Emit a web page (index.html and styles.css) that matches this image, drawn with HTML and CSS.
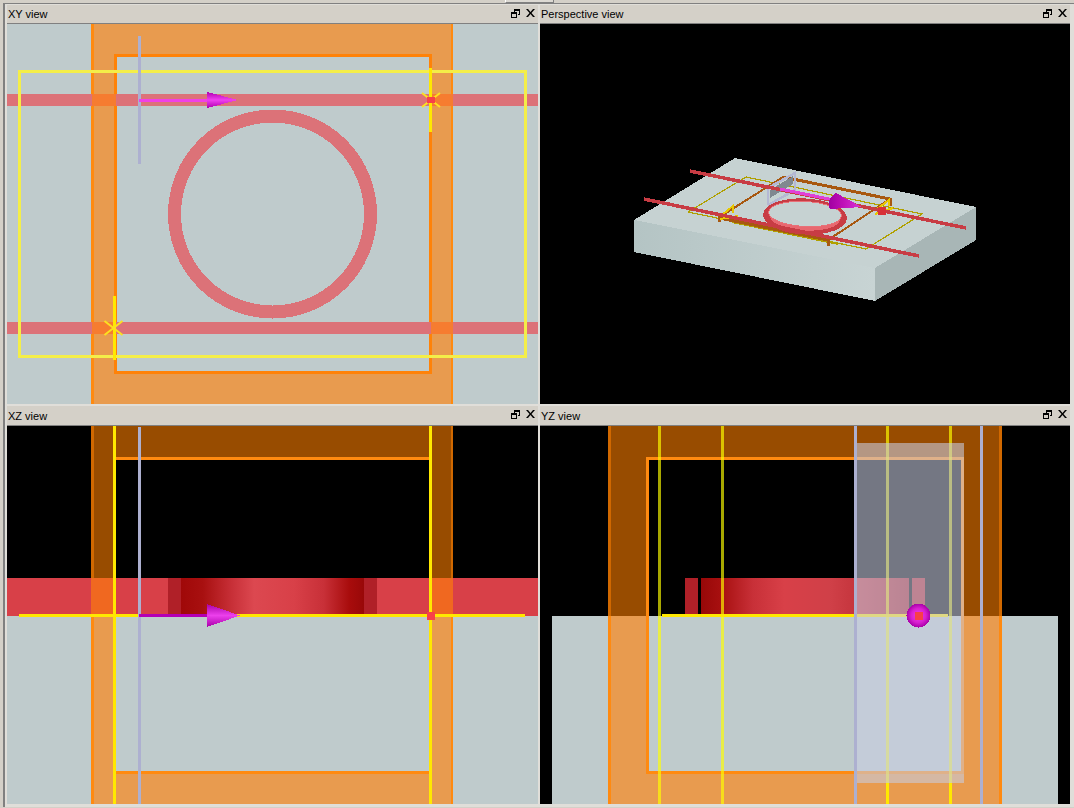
FILE: index.html
```html
<!DOCTYPE html>
<html lang="en">
<head>
<meta charset="utf-8">
<title>Views</title>
<link rel="stylesheet" href="styles.css">
</head>
<body>
<div class="topbar"><div class="toptab"></div></div>
<main class="shell">

<section class="panel">
  <header class="titlebar"><span class="title">XY view</span>
    <span class="controls">
      <svg class="icon" viewBox="0 0 9 9"><path class="glyph" d="M3 0h6v6H7V5h1V2H4v1H3zM0 3h6v6H0zM1 5v3h4V5z"/></svg>
      <svg class="icon" viewBox="0 0 9 9"><path class="glyph" d="M0 0h2l2.500 3 2.500-3h2L5.500 4 9 8H7L4.500 5 2 8H0l3.500-4z"/></svg>
    </span></header>
  <svg class="view" viewBox="7 24 531 380">
    <defs>
      <linearGradient id="arrowA" x1="0" y1="0" x2="0" y2="1"><stop offset="0" stop-color="#b000b0"/><stop offset=".5" stop-color="#f040f0"/><stop offset="1" stop-color="#b000b0"/></linearGradient>
    </defs>
    <rect class="slab" x="7" y="24" width="531" height="380"/>
    <rect class="orange" x="91" y="24" width="362" height="380"/>
    <rect class="edge" x="91" y="24" width="3" height="380"/>
    <rect class="edge" x="451" y="24" width="2" height="380"/>
    <rect class="slab frame" x="115" y="55.500" width="315.500" height="316.500"/>
    <rect class="band" x="7" y="94" width="531" height="12"/>
    <rect class="band" x="7" y="322" width="531" height="12"/>
    <rect class="overlap" x="92" y="94" width="24" height="12"/>
    <rect class="overlap" x="431" y="94" width="22" height="12"/>
    <rect class="overlap" x="92" y="322" width="24" height="12"/>
    <rect class="overlap" x="431" y="322" width="22" height="12"/>
    <circle class="ring" cx="272.500" cy="214" r="98"/>
    <rect class="outline" x="19.500" y="71.500" width="506" height="285"/>
    <rect class="lav" x="138" y="36" width="3" height="128"/>
    <rect class="mag-light" x="139" y="99" width="69" height="2.500"/>
    <path d="M207 92L238 100L207 108z" fill="url(#arrowA)"/>
    <rect class="yel" x="429" y="68" width="3" height="64"/>
    <rect class="yel" x="113" y="296" width="3" height="64"/>
    <path class="cross" d="M422 93l18 14M440 93l-18 14"/>
    <rect class="dot" x="427" y="96.500" width="8" height="6"/>
    <path class="cross" d="M104.500 321l18 14M122.500 321l-18 14"/>
  </svg>
</section>

<section class="panel">
  <header class="titlebar"><span class="title">Perspective view</span>
    <span class="controls">
      <svg class="icon" viewBox="0 0 9 9"><path class="glyph" d="M3 0h6v6H7V5h1V2H4v1H3zM0 3h6v6H0zM1 5v3h4V5z"/></svg>
      <svg class="icon" viewBox="0 0 9 9"><path class="glyph" d="M0 0h2l2.500 3 2.500-3h2L5.500 4 9 8H7L4.500 5 2 8H0l3.500-4z"/></svg>
    </span></header>
  <svg class="view" viewBox="540 24 530 380">
    <defs>
      <linearGradient id="front" x1="634" y1="0" x2="875" y2="0" gradientUnits="userSpaceOnUse"><stop offset="0" stop-color="#b4c4c4"/><stop offset="1" stop-color="#c8d4d4"/></linearGradient>
      <linearGradient id="cone" x1="0" y1="0" x2="1" y2="0"><stop offset="0" stop-color="#a000a0"/><stop offset=".45" stop-color="#c010b8"/><stop offset="1" stop-color="#d838d8"/></linearGradient>
    </defs>
    <rect class="void" x="540" y="24" width="530" height="380"/>
    <polygon class="top" points="634,220 735,158 976,207 875,268"/>
    <polygon points="634,220 875,268 875,301 634,252" fill="url(#front)"/>
    <polygon class="side" points="875,268 976,207 976,240 875,301"/>
    <polygon class="wire" points="746,177 922,214 866,249 688,212"/>
    <path class="wire wire-b" d="M732 222L838 244"/>
    <path class="brown back" d="M783 177L890 199"/>
    <path class="brown" d="M783 177L718 218M890 199L828 240"/>
    <path class="brown thick" d="M719 218L828 240"/>
    <path class="brown back" d="M719 216v6M828 238v8M890 198v8"/>
    <polygon class="pane" points="770,190 793,176 793,184 770,198"/>
    <path class="lavline" d="M768,205V188L795,173V190L768,205"/>
    <path class="yellow3" d="M722 215L733 206V213M720 219L738 216M877 209L889 200V206M875 214L893 208"/>
    <ellipse class="ring3d" cx="805" cy="216.500" rx="42" ry="18" transform="rotate(3 805 216.500)"/>
    <ellipse class="ring3d-l" cx="805" cy="218" rx="35" ry="12.500" transform="rotate(3 805 218)"/>
    <ellipse class="ring3d-i" cx="805" cy="214" rx="36.500" ry="12.500" transform="rotate(3 805 214)"/>
    <path class="red3d" d="M690 171L966 228"/>
    <path class="red3d" d="M644 199L919 256"/>
    <path class="mag3d" d="M780 189L834 200"/>
    <path d="M836 193L862 207L830 209Q825 200 836 193z" fill="url(#cone)"/>
    <rect class="dot3d" x="878" y="207" width="8" height="8"/>
  </svg>
</section>

<section class="panel panel-low">
  <header class="titlebar"><span class="title">XZ view</span>
    <span class="controls">
      <svg class="icon" viewBox="0 0 9 9"><path class="glyph" d="M3 0h6v6H7V5h1V2H4v1H3zM0 3h6v6H0zM1 5v3h4V5z"/></svg>
      <svg class="icon" viewBox="0 0 9 9"><path class="glyph" d="M0 0h2l2.500 3 2.500-3h2L5.500 4 9 8H7L4.500 5 2 8H0l3.500-4z"/></svg>
    </span></header>
  <svg class="view" viewBox="7 426 531 378">
    <defs>
      <linearGradient id="ringXZ" x1="181" y1="0" x2="364" y2="0" gradientUnits="userSpaceOnUse">
        <stop offset="0" stop-color="#a00808"/><stop offset=".12" stop-color="#a81010"/><stop offset=".28" stop-color="#c83038"/><stop offset=".4" stop-color="#dc4850"/><stop offset=".62" stop-color="#d84048"/><stop offset=".78" stop-color="#c83038"/><stop offset=".92" stop-color="#a80c0c"/><stop offset="1" stop-color="#980808"/>
      </linearGradient>
      <linearGradient id="arrowB" x1="0" y1="0" x2="0" y2="1"><stop offset="0" stop-color="#a800a8"/><stop offset=".5" stop-color="#ec40ec"/><stop offset="1" stop-color="#a800a8"/></linearGradient>
    </defs>
    <rect class="void" x="7" y="426" width="531" height="378"/>
    <rect class="slab" x="7" y="616" width="531" height="188"/>
    <rect class="brownfill" x="91" y="426" width="362" height="190"/>
    <rect class="orange" x="91" y="616" width="362" height="188"/>
    <rect class="void" x="115" y="458" width="316" height="158"/>
    <rect class="slab" x="115" y="616" width="316" height="157"/>
    <rect class="edge-dark" x="91" y="426" width="3" height="190"/>
    <rect class="edge-dark" x="451" y="426" width="2" height="190"/>
    <rect class="edge" x="91" y="616" width="3" height="188"/>
    <rect class="edge" x="451" y="616" width="2" height="188"/>
    <rect class="edge" x="115" y="457" width="316" height="3"/>
    <rect class="edge" x="115" y="771" width="316" height="3"/>
    <rect class="redband" x="7" y="578" width="531" height="38"/>
    <rect class="overlap2" x="91" y="578" width="24" height="38"/>
    <rect class="overlap2" x="431" y="578" width="22" height="38"/>
    <rect class="ringside" x="168" y="578" width="13" height="38"/>
    <rect class="ringside" x="364" y="578" width="13" height="38"/>
    <rect x="181" y="578" width="183" height="38" fill="url(#ringXZ)"/>
    <rect class="yel" x="19" y="614" width="506" height="3"/>
    <rect class="yel" x="113" y="426" width="3" height="378"/>
    <rect class="yel" x="429" y="426" width="3" height="378"/>
    <rect class="lav" x="138" y="427" width="3" height="377"/>
    <rect class="mag-dark" x="139" y="614" width="69" height="3"/>
    <path d="M207 604L240 615.500L207 627z" fill="url(#arrowB)"/>
    <rect class="dot" x="427" y="612" width="8" height="8"/>
  </svg>
</section>

<section class="panel panel-low">
  <header class="titlebar"><span class="title">YZ view</span>
    <span class="controls">
      <svg class="icon" viewBox="0 0 9 9"><path class="glyph" d="M3 0h6v6H7V5h1V2H4v1H3zM0 3h6v6H0zM1 5v3h4V5z"/></svg>
      <svg class="icon" viewBox="0 0 9 9"><path class="glyph" d="M0 0h2l2.500 3 2.500-3h2L5.500 4 9 8H7L4.500 5 2 8H0l3.500-4z"/></svg>
    </span></header>
  <svg class="view" viewBox="540 426 530 378">
    <defs>
      <linearGradient id="ringYZ" x1="701" y1="0" x2="909" y2="0" gradientUnits="userSpaceOnUse">
        <stop offset="0" stop-color="#980808"/><stop offset=".1" stop-color="#a81010"/><stop offset=".25" stop-color="#c83038"/><stop offset=".4" stop-color="#d84048"/><stop offset=".62" stop-color="#d04048"/><stop offset=".8" stop-color="#c03038"/><stop offset="1" stop-color="#a82028"/>
      </linearGradient>
      <radialGradient id="ball"><stop offset="0" stop-color="#f040f0"/><stop offset=".6" stop-color="#d820d0"/><stop offset="1" stop-color="#a800a8"/></radialGradient>
    </defs>
    <rect class="void" x="540" y="426" width="530" height="378"/>
    <rect class="slab" x="552" y="616" width="506" height="188"/>
    <rect class="brownfill" x="608" y="426" width="394" height="190"/>
    <rect class="orange" x="608" y="616" width="394" height="188"/>
    <rect class="void" x="647" y="458" width="316" height="158"/>
    <rect class="slab" x="647" y="616" width="316" height="157"/>
    <rect class="edge-dark" x="608" y="426" width="3" height="190"/>
    <rect class="edge-dark" x="999" y="426" width="3" height="190"/>
    <rect class="edge" x="608" y="616" width="3" height="188"/>
    <rect class="edge" x="999" y="616" width="3" height="188"/>
    <rect class="edge" x="646" y="457" width="318" height="3"/>
    <rect class="edge" x="646" y="771" width="318" height="3"/>
    <rect class="edge" x="646" y="457" width="3" height="317"/>
    <rect class="edge" x="961" y="457" width="3" height="317"/>
    <rect class="ringside" x="685" y="578" width="13" height="38"/>
    <rect x="701" y="578" width="208" height="38" fill="url(#ringYZ)"/>
    <rect class="ringside" x="912" y="578" width="13" height="38"/>
    <rect class="yel-soft" x="658" y="426" width="3" height="378"/>
    <rect class="yel-soft" x="721" y="426" width="3" height="378"/>
    <rect class="yel-soft" x="886" y="426" width="3" height="357"/>
    <rect class="yel-soft" x="949" y="426" width="3" height="357"/>
    <rect class="yel" x="886" y="783" width="3" height="21"/>
    <rect class="yel" x="949" y="783" width="3" height="21"/>
    <rect class="yel" x="662" y="614" width="286" height="3"/>
    <rect class="ghost" x="854" y="443" width="110" height="340"/>
    <rect class="lav" x="854" y="426" width="3" height="378"/>
    <rect class="lav" x="980" y="426" width="3" height="378"/>
    <circle cx="918.500" cy="615.500" r="12" fill="url(#ball)"/>
    <rect class="dot" x="915" y="612" width="8" height="8"/>
  </svg>
</section>

</main>
</body>
</html>
```
FILE: styles.css
```css
html, body {
  margin: 0;
  padding: 0;
}
body {
  width: 1074px;
  height: 808px;
  overflow: hidden;
  background: #d4d0c8;
}
.topbar {
  height: 3px;
  padding-left: 505px;
}
.toptab {
  width: 47px;
  height: 2px;
  background: #dcd9d3;
  border-bottom: 1px solid #808080;
  border-left: 1px solid #fff;
  border-right: 1px solid #808080;
}
.shell {
  margin-left: 3px;
  height: 804px;
  box-sizing: border-box;
  border-left: 2px solid #808080;
  border-top: 1px solid #808080;
  background: #e0ded9;
  padding: 1px 0 4px 2px;
  display: grid;
  grid-template-columns: 531px 530px;
  grid-template-rows: 399px 398px;
  column-gap: 2px;
  row-gap: 2px;
}
.panel {
  display: flex;
  flex-direction: column;
  min-width: 0;
}
.titlebar {
  flex: none;
  box-sizing: border-box;
  height: 19px;
  display: flex;
  align-items: center;
  justify-content: space-between;
  background: #d4d0c8;
  border-bottom: 1px solid #808080;
  padding: 0 3px 0 1px;
}
.panel-low .titlebar {
  height: 20px;
}
.title {
  font: 11px/14px "Liberation Sans", Arial, sans-serif;
  color: #000;
}
.controls {
  display: flex;
  gap: 6px;
  align-items: center;
  margin-bottom: 2px;
}
.icon {
  width: 9px;
  height: 9px;
  display: block;
}
.glyph {
  fill: #000;
  fill-rule: evenodd;
}
.view {
  display: block;
  flex: 1;
  width: 100%;
  min-height: 0;
  shape-rendering: crispEdges;
}

/* scene colours */
.void { fill: #000; }
.slab { fill: #bfcbcc; }
.frame { stroke: #ff8208; stroke-width: 3; }
.orange { fill: #e89b4f; }
.edge { fill: #ff8a10; }
.edge-dark { fill: #d06800; }
.brownfill { fill: #984c00; }
.band { fill: #dc7278; }
.overlap { fill: #f67c30; }
.overlap2 { fill: #f06820; }
.redband { fill: #d84048; }
.ringside { fill: #b02028; }
.ring { fill: none; stroke: #dc7278; stroke-width: 13; }
.outline { fill: none; stroke: #f4ee48; stroke-width: 2.500; }
.lav { fill: #adb0d0; }
.mag-light { fill: #f040e8; }
.mag-dark { fill: #b400b4; }
.yel { fill: #ffe800; }
.yel-soft { fill: #ffff00; fill-opacity: .66; }
.cross { fill: none; stroke: #fce020; stroke-width: 2; shape-rendering: auto; }
.dot { fill: #f84048; }
.ghost { fill: #c8cde1; fill-opacity: .58; }

/* perspective view */
.top { fill: #c6d2d2; }
.side { fill: #a8b6b6; }
.wire { fill: none; stroke: #b0a000; stroke-width: 1.200; }
.wire-b { stroke-width: 2; }
.brown { fill: none; stroke: #a85810; stroke-width: 2; }
.back { stroke-width: 3; }
.thick { stroke-width: 3; }
.pane { fill: #808890; }
.lavline { fill: none; stroke: #b4b8d4; stroke-width: 2.500; }
.yellow3 { fill: none; stroke: #e8c800; stroke-width: 2; }
.ring3d { fill: #c83c44; }
.ring3d-l { fill: #e86870; }
.ring3d-i { fill: #c6d2d2; stroke: #e87078; stroke-width: 1; }
.red3d { fill: none; stroke: #c83c44; stroke-width: 3.500; }
.mag3d { fill: none; stroke: #e040d8; stroke-width: 3; }
.dot3d { fill: #d83038; }
```
